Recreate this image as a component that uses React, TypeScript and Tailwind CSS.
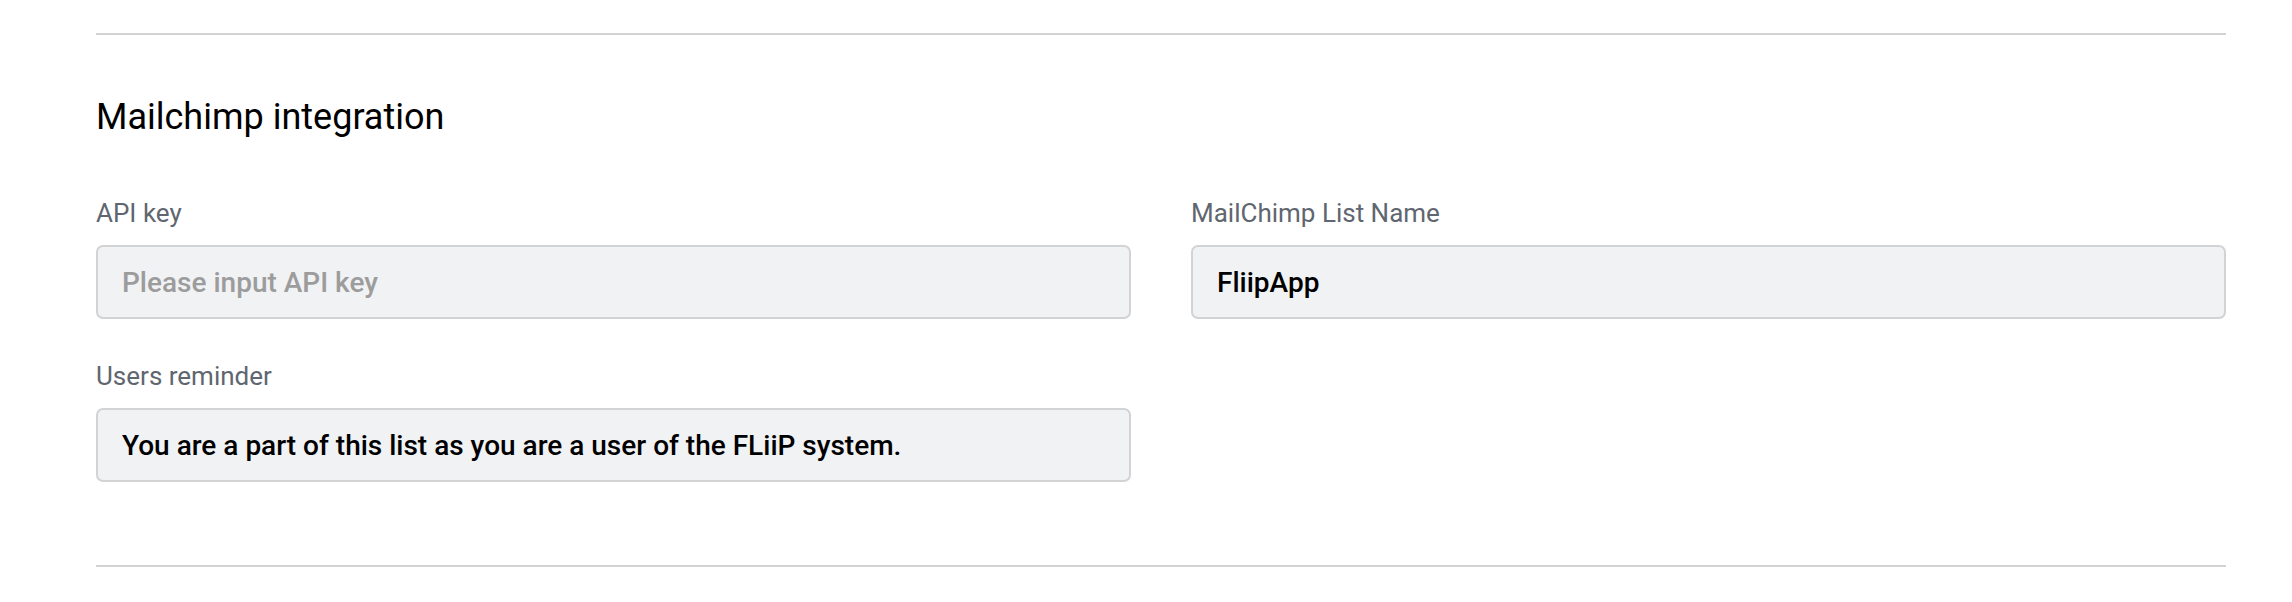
type FieldProps = {
  label: string;
  value?: string;
  placeholder?: string;
};

function Field({ label, value, placeholder }: FieldProps) {
  return (
    <div className="flex flex-col">
      <label className="text-[26px] leading-[36px] text-[#5f6670]">
        {label}
      </label>
      <input
        readOnly
        defaultValue={value}
        placeholder={placeholder}
        className="mt-[14px] h-[74px] w-full rounded-[7px] border-2 border-[#d2d3d5] bg-[#f1f2f4] px-[24px] text-[28px] font-medium text-black outline-none placeholder:text-[#9c9c9c]"
      />
    </div>
  );
}

export default function App() {
  return (
    <div
      className="min-h-[602px] bg-white pl-[96px] pr-[66px] pt-[33px]"
      style={{ fontFamily: "Roboto, 'Liberation Sans', sans-serif" }}
    >
      <div className="h-[2px] bg-[#d3d3d3]" />

      <h2 className="mt-[61px] text-[36px] leading-[43px] font-normal text-black">
        Mailchimp integration
      </h2>

      <div className="mt-[56px] grid grid-cols-2 gap-x-[60px] gap-y-[39px]">
        <Field label="API key" placeholder="Please input API key" />
        <Field label="MailChimp List Name" value="FliipApp" />
        <Field
          label="Users reminder"
          value="You are a part of this list as you are a user of the FLiiP system."
        />
      </div>

      <div className="mt-[83px] h-[2px] bg-[#d3d3d3]" />
    </div>
  );
}
